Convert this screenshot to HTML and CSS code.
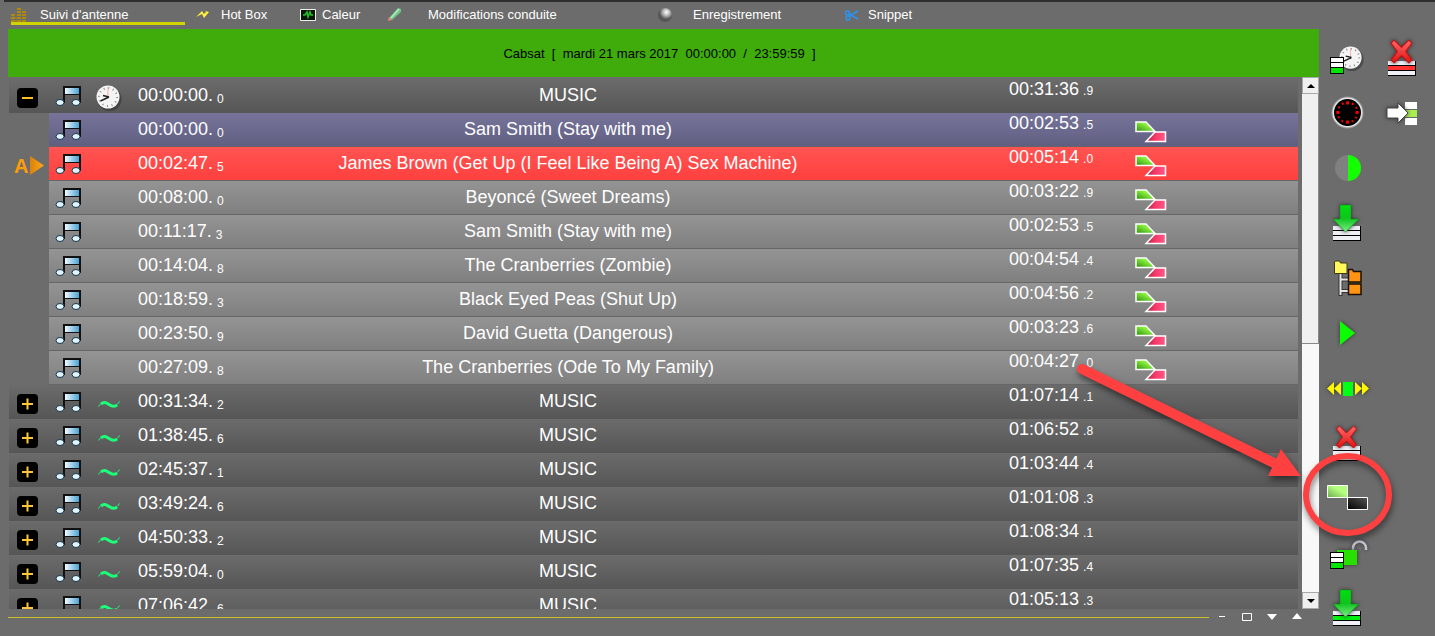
FILE: index.html
```html
<!DOCTYPE html>
<html lang="fr">
<head>
    <meta charset="UTF-8">
    <meta name="viewport" content="width=device-width, initial-scale=1.0">
    <title>Suivi d'antenne</title>
    <link rel="stylesheet" href="styles.css">
</head>
<body>
    <!-- Shared icons -->
    <svg class="defs" width="0" height="0">
        <defs>
            <linearGradient id="g-note"><stop offset="0" stop-color="#f2faff"/><stop offset="1" stop-color="#4aa3d4"/></linearGradient>
            <linearGradient id="g-green" x1="0" y1="1" x2="1" y2="0"><stop offset="0" stop-color="#2f8a10"/><stop offset="0.6" stop-color="#86f03c"/><stop offset="1" stop-color="#9dff50"/></linearGradient>
            <linearGradient id="g-pink"><stop offset="0" stop-color="#b3203f"/><stop offset="0.5" stop-color="#f83a6c"/><stop offset="1" stop-color="#ff5a88"/></linearGradient>
            <linearGradient id="g-red" x2="0" y2="1"><stop offset="0" stop-color="#ff6a6a"/><stop offset="1" stop-color="#e01010"/></linearGradient>
            <linearGradient id="g-down" x2="0" y2="1"><stop offset="0" stop-color="#00e010"/><stop offset="0.5" stop-color="#0fc41c"/><stop offset="1" stop-color="#7df08a"/></linearGradient>
            <linearGradient id="g-light" x1="0" y1="1" x2="1" y2="0"><stop offset="0" stop-color="#6fa850"/><stop offset="0.6" stop-color="#b4ff80"/></linearGradient>
            <linearGradient id="g-dark" x1="0" y1="1" x2="1" y2="0"><stop offset="0" stop-color="#000"/><stop offset="1" stop-color="#555"/></linearGradient>
            <radialGradient id="g-ball" cx="0.6" cy="0.3"><stop offset="0" stop-color="#fff"/><stop offset="0.5" stop-color="#b4b4b4"/><stop offset="1" stop-color="#555"/></radialGradient>
            <linearGradient id="g-marker"><stop offset="0" stop-color="#d98208"/><stop offset="1" stop-color="#ffa818"/></linearGradient>
        </defs>
        <symbol id="note" viewBox="0 0 28 24">
            <path d="M8 3h18M9 3v16M25 3v16" stroke="#111" stroke-width="2" fill="none"/>
            <path d="M10 4h14v6H10z" fill="url(#g-note)"/>
            <path d="M9 10.500h16" stroke="#111"/>
            <ellipse cx="5" cy="18.500" rx="4" ry="3" fill="#e2f5ff" stroke="#15384c"/>
            <ellipse cx="21" cy="18.500" rx="4" ry="3" fill="#e2f5ff" stroke="#15384c"/>
        </symbol>
        <symbol id="clock" viewBox="0 0 28 28">
            <circle cx="14.500" cy="15" r="12" fill="#333" opacity="0.6"/>
            <circle cx="13" cy="13" r="11.500" fill="#f4f4f4"/>
            <circle cx="13" cy="13" r="9" fill="none" stroke="#888" stroke-width="2" stroke-dasharray="1 3.712"/>
            <path d="M13 3v10" stroke="#f0b0a8"/>
            <path d="M14 13L8 11.500M14 13L5.500 17" stroke="#222" stroke-width="1.500"/>
        </symbol>
        <symbol id="wave" viewBox="0 0 24 12">
            <path d="M1.500 7.500C5 2 8 2.500 12 5s7 3 10.500-2.500" fill="none" stroke="#1cff78" stroke-width="1"/>
            <path d="M4 5C7 2.500 9 3.500 12 5.500s6 2.500 8 .5" fill="none" stroke="#1cff78" stroke-width="3"/>
        </symbol>
        <symbol id="mix" viewBox="0 0 32 22">
            <path d="M1 1h10l9 9.500H1z" fill="url(#g-green)" stroke="#fff" stroke-width="1.500"/>
            <path d="M20 11h10.500v9.500H11z" fill="url(#g-pink)" stroke="#fff" stroke-width="1.500"/>
        </symbol>
        <symbol id="list" viewBox="0 0 28 15">
            <path d="M0 0h28v15H0z" fill="#000"/>
            <path d="M0 0h27v4H0zM0 5h27v4H0zM0 10h27v4H0z" fill="#eef0f6"/>
        </symbol>
        <symbol id="cross" viewBox="0 0 24 24">
            <path d="M2 4l3-3 7 7 7-7 3 3-6 8 6 8-3 3-7-7-7 7-3-3 6-8z" fill="url(#g-red)" stroke="#c81010" stroke-linejoin="round"/>
        </symbol>
        <symbol id="minilist" viewBox="0 0 14 17">
            <path d="M0 0h14v17H0z" fill="#000"/>
            <path d="M1 1h12v4H1zM1 6h12v4H1z" fill="#fff"/>
            <path d="M1 11h12v5H1z" fill="#00e600"/>
        </symbol>
    </svg>

    <nav class="tabs">
        <button class="tab tab-suivi active">
            <svg width="16" height="16" viewBox="0 0 16 16"><path d="M0 15h15M0 12h15M0 9h4M6 9h9M6 6h4M11 6h4M6 3h4" stroke="#ad8a0c" stroke-width="2"/><path d="M5 2v14M10.500 2v14" stroke="#6c6c6c"/></svg>
            Suivi d'antenne
        </button>
        <button class="tab tab-hotbox">
            <svg width="16" height="16" viewBox="0 0 16 16"><path d="M0 11l6-6 2 3 2-2-1-1 4 1-5 6-2-4z" fill="#fff23a"/></svg>
            Hot Box
        </button>
        <button class="tab tab-caleur">
            <svg width="16" height="16" viewBox="0 0 16 16"><path d="M.5 3.500h15v11H.5z" fill="#0a160a" stroke="#eee"/><path d="M3 9h2l2-3 1 5 2-5 1 3h2" stroke="#1fc41f" stroke-width="1.500" fill="none"/></svg>
            Caleur
        </button>
        <button class="tab tab-modif">
            <svg width="16" height="16" viewBox="0 0 16 16"><path d="M1 12L10 2l3 1v3L4 14z" fill="#6fc585"/><path d="M3 12l8-9" stroke="#b4ebc0" stroke-width="1.500"/><path d="M0 15l1-4 3 3z" fill="#f0877c"/></svg>
            Modifications conduite
        </button>
        <button class="tab tab-enreg">
            <svg width="16" height="16" viewBox="0 0 16 16"><circle cx="8" cy="9" r="7" fill="url(#g-ball)"/></svg>
            Enregistrement
        </button>
        <button class="tab tab-snippet">
            <svg width="16" height="16" viewBox="0 0 16 16"><g fill="none" stroke="#2c94f0" stroke-width="1.500"><path d="M14 5L5 10M14 13L5 8"/><circle cx="3.500" cy="7" r="2"/><circle cx="4" cy="12" r="2"/></g></svg>
            Snippet
        </button>
    </nav>

    <div class="layout">
        <main class="main">
            <h1 class="title">Cabsat&nbsp; [&nbsp; mardi 21 mars 2017&nbsp; 00:00:00&nbsp; /&nbsp; 23:59:59&nbsp; ]</h1>
            <div class="playlist">
                <div class="rows">
                    <table>
                        <colgroup>
                            <col class="col-expand"><col class="col-note"><col class="col-sync"><col class="col-time"><col><col class="col-length"><col class="col-mix">
                        </colgroup>
                        <tbody id="playlist-body"></tbody>
                    </table>
                </div>
                <div class="scrollbar">
                    <button class="scroll-btn" aria-label="Monter"><svg width="8" height="4"><path d="M0 4l4-4 4 4z"/></svg></button>
                    <div class="thumb"></div>
                    <div class="scroll-track"></div>
                    <button class="scroll-btn" aria-label="Descendre"><svg width="8" height="4"><path d="M0 0l4 4 4-4z"/></svg></button>
                </div>
            </div>
            <footer class="footer">
                <hr class="line">
                <button class="win-btn" aria-label="Réduire"><svg width="12" height="12"><path d="M3 5.500h6" stroke="#fff"/></svg></button>
                <button class="win-btn" aria-label="Agrandir"><svg width="12" height="12"><path d="M1.500 2.500h9v7h-9z" stroke="#fff" fill="none"/></svg></button>
                <button class="win-btn" aria-label="Suivant"><svg width="12" height="12"><path d="M1 3h10L6 9z" fill="#fff"/></svg></button>
                <button class="win-btn" aria-label="Précédent"><svg width="12" height="12"><path d="M1 8h10L6 2z" fill="#fff"/></svg></button>
            </footer>
        </main>

        <aside class="tools">
            <button class="tool" aria-label="Heure fixe"><svg viewBox="0 0 55 55">
                <use href="#clock" x="18" y="14" width="27" height="27"/>
                <use href="#minilist" x="10" y="26" width="14" height="17"/>
            </svg></button>
            <button class="tool" aria-label="Horloge"><svg viewBox="0 0 55 55">
                <circle cx="27.500" cy="26.500" r="16" fill="#999"/>
                <circle cx="27.500" cy="26.500" r="15" fill="#e4e4e4"/>
                <circle cx="27.500" cy="26.500" r="13.500" fill="#000"/>
                <circle cx="27.500" cy="26.500" r="10" fill="none" stroke="#f00000" stroke-width="2" stroke-dasharray="2 3.236" stroke-dashoffset="1"/>
                <path d="M26 15.500h3v3h-3zM26 34.500h3v3h-3zM16.500 25h3v3h-3zM35.500 25h3v3h-3z" fill="#f00000"/>
            </svg></button>
            <button class="tool" aria-label="Contraste"><svg viewBox="0 0 55 55">
                <path d="M28 14a13 13 0 0 0 0 26z" fill="#808080"/>
                <path d="M28 14a13 13 0 0 1 0 26z" fill="#14ff00"/>
            </svg></button>
            <button class="tool" aria-label="Insérer"><svg viewBox="0 0 55 55">
                <use href="#list" x="13" y="30" width="28" height="15"/>
                <path class="shade" d="M20 9h11v14h8L25.500 36 13 23h7z" fill="url(#g-down)" stroke="#0a8a14" stroke-width="0.500"/>
            </svg></button>
            <button class="tool" aria-label="Arborescence"><svg viewBox="0 0 55 55">
                <path d="M20.500 23v22M20 28.500h8M20 40h8" stroke="#333" stroke-width="4"/>
                <path d="M20.500 22v22M20 28.500h8M20 40h8" stroke="#e4e4e4" stroke-width="2"/>
                <path d="M14.500 11l1-1h4l1 2h6.500v10.500H14.500z" fill="#fff95c" stroke="#3c3810"/>
                <path d="M28.500 20v-1.500h4l1 2h7.500V31H28.500zM28.500 33h12.500v10.500H28.500z" fill="#ff9414" stroke="#1c1000" stroke-width="1.500"/>
            </svg></button>
            <button class="tool" aria-label="Lecture"><svg viewBox="0 0 55 55">
                <path class="shade" d="M20 15l15 12-15 12z" fill="#0aff00"/>
            </svg></button>
            <button class="tool" aria-label="Navigation"><svg viewBox="0 0 55 55">
                <path class="shade" d="M14 21v13l-7-6.500zM21 21v13l-7-6.500zM35 21v13l7-6.500zM42 21v13l7-6.500z" fill="#fff600"/>
                <path d="M23 21h10v14H23z" fill="#00ff14"/>
            </svg></button>
            <button class="tool" aria-label="Supprimer"><svg viewBox="0 0 55 55">
                <use href="#list" x="13" y="30" width="28" height="15"/>
                <use class="shade" href="#cross" x="14" y="9" width="25" height="24"/>
            </svg></button>
            <button class="tool" aria-label="Enchaînement"><svg viewBox="0 0 55 55">
                <path d="M7.500 14.500h20v12h-20z" fill="url(#g-light)" stroke="#fff"/>
                <path d="M27.500 26.500h20v12h-20z" fill="url(#g-dark)" stroke="#fff"/>
            </svg></button>
            <button class="tool" aria-label="Déverrouiller"><svg viewBox="0 0 55 55">
                <path class="shade" d="M33 24v-2a6.500 6.500 0 0 1 13 0v2" fill="none" stroke="#c4c4cc" stroke-width="2.500"/>
                <path class="shade" d="M17 24h20v15H17z" fill="#28e000"/>
                <use href="#minilist" x="10" y="26" width="14" height="17"/>
            </svg></button>
            <button class="tool" aria-label="Insérer ici"><svg viewBox="0 0 55 55">
                <use href="#list" x="13" y="30" width="28" height="15"/>
                <path d="M13 35h27v4H13z" fill="#00f010"/>
                <path class="shade" d="M20 9h11v14h8L25.500 36 13 23h7z" fill="url(#g-down)" stroke="#0a8a14" stroke-width="0.500"/>
            </svg></button>
            <button class="tool" aria-label="Supprimer la ligne"><svg viewBox="0 0 55 55">
                <use href="#list" x="13" y="30" width="28" height="15"/>
                <path d="M13 35h27v4H13z" fill="#ff3232"/>
                <use class="shade" href="#cross" x="14" y="8" width="25" height="25"/>
            </svg></button>
            <button class="tool" aria-label="Déplacer"><svg viewBox="0 0 55 55">
                <path d="M30 16h12v23H30z" fill="#fff"/>
                <path d="M30 23h12v8H30z" fill="#a8ee50"/>
                <path d="M30 23.500h12M30 31.500h12" stroke="#666"/>
                <path class="shade" d="M12 22h11v-5l10 10-10 10v-5H12z" fill="#fff" stroke="#444"/>
            </svg></button>
        </aside>
    </div>

    <!-- Arrow and ring over the crossfade tool -->
    <svg class="callout" width="320" height="190" viewBox="1070 355 320 190">
        <path d="M1082 369L1278 465" stroke="#ff4040" stroke-width="10" stroke-linecap="round"/>
        <path d="M1281 449l20 27h-33z" fill="#ff4040"/>
        <ellipse cx="1347.500" cy="494.500" rx="41.500" ry="38.500" fill="none" stroke="#ff4040" stroke-width="6"/>
    </svg>

    <script>
        // type, start, tenth, title, length, tenth
        const rows = [
            ["open", "00:00:00", 0, "MUSIC", "00:31:36", 9],
            ["played", "00:00:00", 0, "Sam Smith (Stay with me)", "00:02:53", 5],
            ["onair", "00:02:47", 5, "James Brown (Get Up (I Feel Like Being A) Sex Machine)", "00:05:14", 0],
            ["song", "00:08:00", 0, "Beyoncé (Sweet Dreams)", "00:03:22", 9],
            ["song", "00:11:17", 3, "Sam Smith (Stay with me)", "00:02:53", 5],
            ["song", "00:14:04", 8, "The Cranberries (Zombie)", "00:04:54", 4],
            ["song", "00:18:59", 3, "Black Eyed Peas (Shut Up)", "00:04:56", 2],
            ["song", "00:23:50", 9, "David Guetta (Dangerous)", "00:03:23", 6],
            ["song", "00:27:09", 8, "The Cranberries (Ode To My Family)", "00:04:27", 0],
            ["closed", "00:31:34", 2, "MUSIC", "01:07:14", 1],
            ["closed", "01:38:45", 6, "MUSIC", "01:06:52", 8],
            ["closed", "02:45:37", 1, "MUSIC", "01:03:44", 4],
            ["closed", "03:49:24", 6, "MUSIC", "01:01:08", 3],
            ["closed", "04:50:33", 2, "MUSIC", "01:08:34", 1],
            ["closed", "05:59:04", 0, "MUSIC", "01:07:35", 4],
            ["closed", "07:06:42", 6, "MUSIC", "01:05:13", 3]
        ];

        const expandCell = {
            open: '<button class="expander" aria-label="Replier"><svg width="21" height="20"><path d="M5 10h11" stroke="#ffc020" stroke-width="2"/></svg></button>',
            closed: '<button class="expander" aria-label="Déplier"><svg width="21" height="20"><path d="M5 10h11M10.500 4.500v11" stroke="#ffc838" stroke-width="2"/></svg></button>',
            onair: '<span class="marker">A<svg width="14" height="20"><path d="M0 0l14 9.500L0 19z" fill="url(#g-marker)"/></svg></span>'
        };
        const syncCell = {
            open: '<svg class="clock"><use href="#clock"/></svg>',
            closed: '<svg class="wave"><use href="#wave"/></svg>'
        };

        const body = document.getElementById("playlist-body");
        rows.forEach(([type, start, startTenth, title, length, lengthTenth]) => {
            const isBlock = type === "open" || type === "closed";
            const tr = document.createElement("tr");
            tr.className = isBlock ? "block" : `item ${type}`;
            tr.innerHTML = `
                <td class="expand">${expandCell[type] || ""}</td>
                <td><svg class="note"><use href="#note"/></svg></td>
                <td>${syncCell[type] || ""}</td>
                <td class="time">${start}.<small>${startTenth}</small></td>
                <td class="name">${title}</td>
                <td class="length">${length}<small>.${lengthTenth}</small></td>
                <td>${isBlock ? "" : '<svg class="mix"><use href="#mix"/></svg>'}</td>`;
            body.appendChild(tr);
        });
    </script>
</body>
</html>
```
FILE: styles.css
```css
* {
    box-sizing: border-box;
}
body {
    margin: 0;
    height: 100vh;
    display: flex;
    flex-direction: column;
    overflow: hidden;
    position: relative;
    background: #6c6c6c;
    color: #fff;
    font-family: "Liberation Sans", Arial, sans-serif;
    font-size: 13px;
}
button {
    padding: 0;
    border: 0;
    background: none;
    color: inherit;
    font: inherit;
    cursor: pointer;
}
svg {
    display: block;
    flex: none;
}
.defs {
    position: absolute;
}

/* tabs */
.tabs {
    display: flex;
    align-items: flex-start;
    height: 29px;
    flex: none;
    margin-left: 4px;
    padding-left: 7px;
    border-top: 2px solid #2e2e2e;
}
.tab {
    display: flex;
    align-items: flex-start;
    height: 23px;
    padding-top: 4px;
    line-height: 18px;
    white-space: nowrap;
    border-bottom: 3px solid transparent;
}
.tab.active {
    border-color: #d2d400;
}
.tab-suivi {
    width: 174px;
    margin-right: 11px;
    gap: 13px;
}
.tab-hotbox {
    width: 104px;
    gap: 9px;
}
.tab-caleur {
    width: 88px;
    gap: 6px;
}
.tab-modif {
    width: 269px;
    gap: 24px;
}
.tab-enreg {
    width: 187px;
    gap: 20px;
}
.tab-snippet {
    gap: 8px;
}

.layout {
    flex: 1;
    min-height: 0;
    display: flex;
}
.main {
    flex: 1;
    min-width: 0;
    margin-left: 8px;
    display: flex;
    flex-direction: column;
}
.title {
    flex: none;
    margin: 0;
    padding: 2px 8px 0 0;
    background: #3fac0c;
    color: #000;
    font-size: 13px;
    font-weight: normal;
    line-height: 46px;
    text-align: center;
}

/* playlist */
.playlist {
    flex: 1;
    min-height: 0;
    display: flex;
}
.rows {
    flex: 1;
    overflow: hidden;
    padding: 2px 4px 0 1px;
}
table {
    width: 100%;
    table-layout: fixed;
    border-collapse: separate;
    border-spacing: 0;
}
.col-expand, .col-note {
    width: 40px;
}
.col-sync {
    width: 49px;
}
.col-time {
    width: 110px;
}
.col-length {
    width: 247px;
}
.col-mix {
    width: 163px;
}
td {
    height: 34px;
    padding: 0;
    vertical-align: top;
    font-size: 18px;
    line-height: 32px;
    white-space: nowrap;
}
.block td {
    background: linear-gradient(#6b6b6b, #565656);
}
.item td {
    background: linear-gradient(#949494, #7f7f7f);
    box-shadow: inset 0 -1px #666;
}
.item.played td {
    background: linear-gradient(#76749a, #605e80);
}
.item.onair td {
    background: linear-gradient(#ff5452, #ff403e);
}
.item td.expand {
    background: none;
    box-shadow: none;
}
.expander {
    display: block;
    margin: 9px 0 0 8px;
    background: #000;
    border-radius: 4px;
}
.marker {
    display: flex;
    align-items: center;
    gap: 2px;
    height: 34px;
    padding: 3px 0 0 5px;
    color: #ff9c08;
    font-size: 20px;
    font-weight: bold;
}
.note {
    width: 28px;
    height: 24px;
    margin: 5px 0 0 6px;
}
.clock {
    width: 28px;
    height: 28px;
    margin: 5px 0 0 6px;
}
.wave {
    width: 24px;
    height: 12px;
    margin: 14px 0 0 8px;
}
.mix {
    width: 32px;
    height: 22px;
    margin-top: 8px;
}
small {
    font-size: 12px;
    line-height: 12px;
}
.time small {
    position: relative;
    top: 2px;
    margin-left: 4px;
}
.name {
    text-align: center;
}
.length {
    padding-left: 121px;
    line-height: 20px;
}
.length small {
    margin-left: 4px;
}

/* scrollbar */
.scrollbar {
    width: 17px;
    display: flex;
    flex-direction: column;
    background: #f8f8f8;
}
.scroll-btn {
    display: flex;
    align-items: center;
    justify-content: center;
    height: 17px;
    background: #f0f0f0;
    border: 1px solid #a8a8a8;
}
.thumb {
    flex: 249;
    background: #f0f0f0;
    border-right: 1px solid #888;
    border-bottom: 1px solid #888;
}
.scroll-track {
    flex: 249;
}

.footer {
    flex: none;
    height: 27px;
    display: flex;
    align-items: flex-start;
    padding-right: 10px;
}
.line {
    flex: 1;
    margin: 8px 0 0;
    border: 0;
    border-top: 1px solid #c8c024;
}
.win-btn {
    width: 25px;
    height: 16px;
    display: flex;
    align-items: center;
    justify-content: center;
}

/* right-hand tools */
.tools {
    flex: none;
    display: grid;
    grid-auto-flow: column;
    grid-template-rows: repeat(11, 55px);
    grid-auto-columns: 55px;
    padding: 2px 5px 0 1px;
}
.tool svg {
    width: 55px;
    height: 55px;
}
.shade {
    filter: drop-shadow(0 0 2px #333);
}

.callout {
    position: absolute;
    top: 355px;
    right: 45px;
    overflow: visible;
    pointer-events: none;
    filter: drop-shadow(1px 4px 3px rgba(0, 0, 0, 0.5));
}
```
